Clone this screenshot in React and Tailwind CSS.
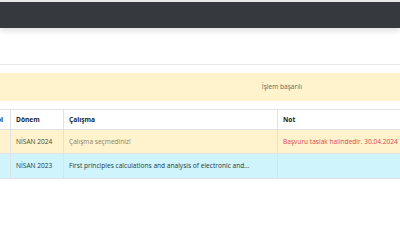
import React from 'react';

const cols = ['w-[50px]', 'w-[53px]', 'w-[214px]', 'w-[327px]'];

const Row = ({ bg, cells, h, bold }) => (
    <div className={`flex ${h} ${bg} border-b border-[#dee2e6]`}>
        {cells.map((c, i) => (
            <div
                key={i}
                className={`${cols[i]} shrink-0 flex items-center px-[5px] whitespace-nowrap overflow-hidden ${i > 0 ? 'border-l border-[#dee2e6]' : 'justify-end pr-[7px]'} ${bold ? 'font-bold text-[#212529]' : ''} ${c.cls || ''}`}
            >
                {c.text}
            </div>
        ))}
    </div>
);

export default function App() {
    return (
        <div className="w-[400px] h-[250px] overflow-hidden bg-white text-[6.6px] text-[#2b2b2b] font-['Open_Sans',sans-serif]">
            {/* Navbar */}
            <div className="h-[2px] bg-[#ececec]" />
            <div className="h-[26px] bg-[#363a3e] shadow-[0_3px_6px_rgba(0,0,0,0.12)] relative z-10" />

            {/* Page header */}
            <div className="h-[36px]" />
            <div className="h-px bg-[#e6e8ea]" />

            <div className="-ml-[40px] w-[644px] pt-[8px]">
                {/* Alert */}
                <div className="h-[28px] bg-[#fff3cd] flex items-center justify-center text-[#6b6450]">
                    İşlem başarılı
                </div>

                {/* Table */}
                <div className="mt-[8px] border-t border-[#dee2e6]">
                    <Row
                        h="h-[20px]"
                        bold
                        bg="bg-white"
                        cells={[
                            { text: 'Tipi' },
                            { text: 'Dönem' },
                            { text: 'Çalışma' },
                            { text: 'Not' },
                        ]}
                    />
                    <Row
                        h="h-[24px]"
                        bg="bg-[#fff3cd]"
                        cells={[
                            { text: '' },
                            { text: 'NİSAN 2024', cls: 'text-[#4d4630]' },
                            { text: 'Çalışma seçmediniz!', cls: 'text-[#8a8066]' },
                            { text: 'Başvuru taslak halindedir. 30.04.2024', cls: 'text-[#e0464f]' },
                        ]}
                    />
                    <Row
                        h="h-[25px]"
                        bg="bg-[#cff4fc]"
                        cells={[
                            { text: '' },
                            { text: 'NİSAN 2023', cls: 'text-[#24393d]' },
                            { text: 'First principles calculations and analysis of electronic and...', cls: 'text-[#24393d]' },
                            { text: '' },
                        ]}
                    />
                </div>
            </div>
        </div>
    );
}
